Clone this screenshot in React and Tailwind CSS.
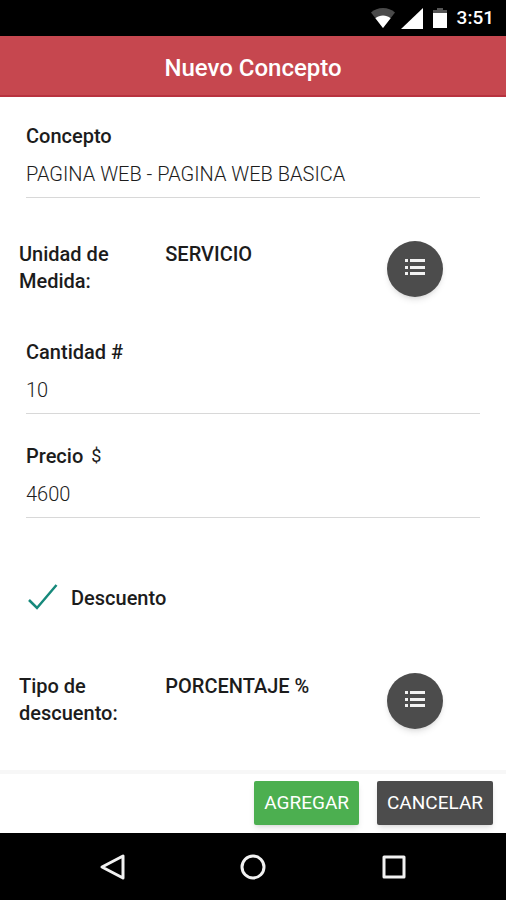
import { useState } from 'react';
import { clsx } from 'clsx';

const StatusBar = () => (
  <div className="h-9 bg-black flex items-center justify-end gap-1.5 pr-3 text-white flex-shrink-0">
    <svg width="24" height="20" viewBox="0 0 24 20" aria-hidden="true">
      <path d="M12 20 0 4.6C3.200 1.600 7.400 0 12 0s8.800 1.600 12 4.600Z" fill="#4a4a4a" />
      <path d="M12 20 4.400 10.200C6.600 8.500 9.200 7.600 12 7.600s5.400.9 7.600 2.600Z" fill="#fff" />
    </svg>
    <svg width="22" height="21" viewBox="0 0 22 21" aria-hidden="true">
      <path d="M22 0v21H0Z" fill="#fff" />
    </svg>
    <svg width="22" height="20" viewBox="0 0 22 20" aria-hidden="true">
      <path d="M4 6V2h4V0h6v2h4v4Z" fill="#555" />
      <path d="M4 5h14v15H4Z" fill="#fff" />
    </svg>
    <span className="text-[19px] leading-9 font-medium">3:51</span>
  </div>
);

const Field = ({ id, label, suffix, defaultValue, inputMode }) => (
  <div className="mx-6.5">
    <label htmlFor={id} className="flex gap-2 leading-7 font-medium">
      {label}
      {suffix && <span className="font-normal text-lg leading-7">{suffix}</span>}
    </label>
    <input
      id={id}
      type="text"
      inputMode={inputMode}
      defaultValue={defaultValue}
      className="block w-full h-12 bg-transparent font-light border-b border-[#d8d8d8] outline-none focus:border-[#c6474f]"
    />
  </div>
);

const PickerRow = ({ label, value }) => (
  <div className="flex items-start px-4.75 font-medium leading-[27px]">
    <div className="w-5/16 pr-8 flex-shrink-0">{label}</div>
    <div className="flex-1">{value}</div>
    <button
      type="button"
      aria-label={label}
      className="w-14 h-14 mr-11 rounded-full bg-[#4c4c4c] flex justify-center pt-4.5 shadow-md flex-shrink-0"
    >
      <svg width="20" height="17" viewBox="0 0 20 17" fill="#f2f2f2" aria-hidden="true">
        <path d="M0 0h3v3H0ZM5 0h15v3H5ZM0 7h3v3H0ZM5 7h15v3H5ZM0 13h3v3H0ZM5 13h15v3H5Z" />
      </svg>
    </button>
  </div>
);

const NavBar = () => (
  <nav className="h-[67px] bg-black flex items-center justify-center gap-[99px] flex-shrink-0">
    <button type="button" aria-label="Atrás" className="w-[42px] h-12 flex items-center justify-center">
      <svg width="28" height="28" viewBox="0 0 28 28" fill="none" stroke="#f2f2f2" strokeWidth="3" strokeLinejoin="round">
        <path d="M25 3v22L4 14Z" />
      </svg>
    </button>
    <button type="button" aria-label="Inicio" className="w-[42px] h-12 flex items-center justify-center">
      <svg width="26" height="26" viewBox="0 0 26 26" fill="none" stroke="#f2f2f2" strokeWidth="3">
        <circle cx="13" cy="13" r="11" />
      </svg>
    </button>
    <button type="button" aria-label="Recientes" className="w-[42px] h-12 flex items-center justify-center">
      <svg width="24" height="24" viewBox="0 0 24 24" fill="none" stroke="#f2f2f2" strokeWidth="3" strokeLinejoin="round">
        <path d="M2 2h20v20H2Z" />
      </svg>
    </button>
  </nav>
);

const App = () => {
  const [discount, setDiscount] = useState(true);

  return (
    <div className="min-h-screen flex flex-col bg-white text-[#1c1c1c] text-xl font-[Roboto,sans-serif]">
      <StatusBar />
      <header className="h-[61px] pt-1 bg-[#c6474f] border-b-2 border-[#b8323f] flex items-center justify-center flex-shrink-0">
        <h1 className="text-white text-2xl font-medium">Nuevo Concepto</h1>
      </header>

      <main className="flex-1 pt-[25px]">
        <Field id="concepto" label="Concepto" defaultValue="PAGINA WEB - PAGINA WEB BASICA" />
        <div className="pt-[43px] pb-[41px]">
          <PickerRow label="Unidad de Medida:" value="SERVICIO" />
        </div>
        <div className="flex flex-col gap-7">
          <Field id="cantidad" label="Cantidad #" defaultValue="10" inputMode="numeric" />
          <Field id="precio" label="Precio" suffix="$" defaultValue="4600" inputMode="decimal" />
        </div>

        <label className="relative mx-6.5 mt-16 h-8 flex items-center gap-3 font-medium">
          <input
            type="checkbox"
            checked={discount}
            onChange={(e) => setDiscount(e.target.checked)}
            className="absolute w-8 h-8 opacity-0"
          />
          <svg
            width="33"
            height="28"
            viewBox="0 0 33 28"
            fill="none"
            stroke="#16897b"
            strokeWidth="2.500"
            className={clsx(!discount && 'opacity-20')}
            aria-hidden="true"
          >
            <path d="M3 16 11 24 30.500 1" />
          </svg>
          Descuento
        </label>

        <div className="pt-[59px] pb-[41px]">
          <PickerRow label="Tipo de descuento:" value="PORCENTAJE %" />
        </div>
      </main>

      <footer className="border-t-4 border-[#f7f7f7] px-3.25 pt-[7px] pb-2 flex justify-end gap-4.5 text-white text-[19px] flex-shrink-0">
        <button type="button" className="h-11 px-2.5 rounded-xs bg-[#4caf50] shadow-md">
          AGREGAR
        </button>
        <button type="button" className="h-11 px-2.5 rounded-xs bg-[#4c4c4c] shadow-md">
          CANCELAR
        </button>
      </footer>
      <NavBar />
    </div>
  );
};

export default App;
